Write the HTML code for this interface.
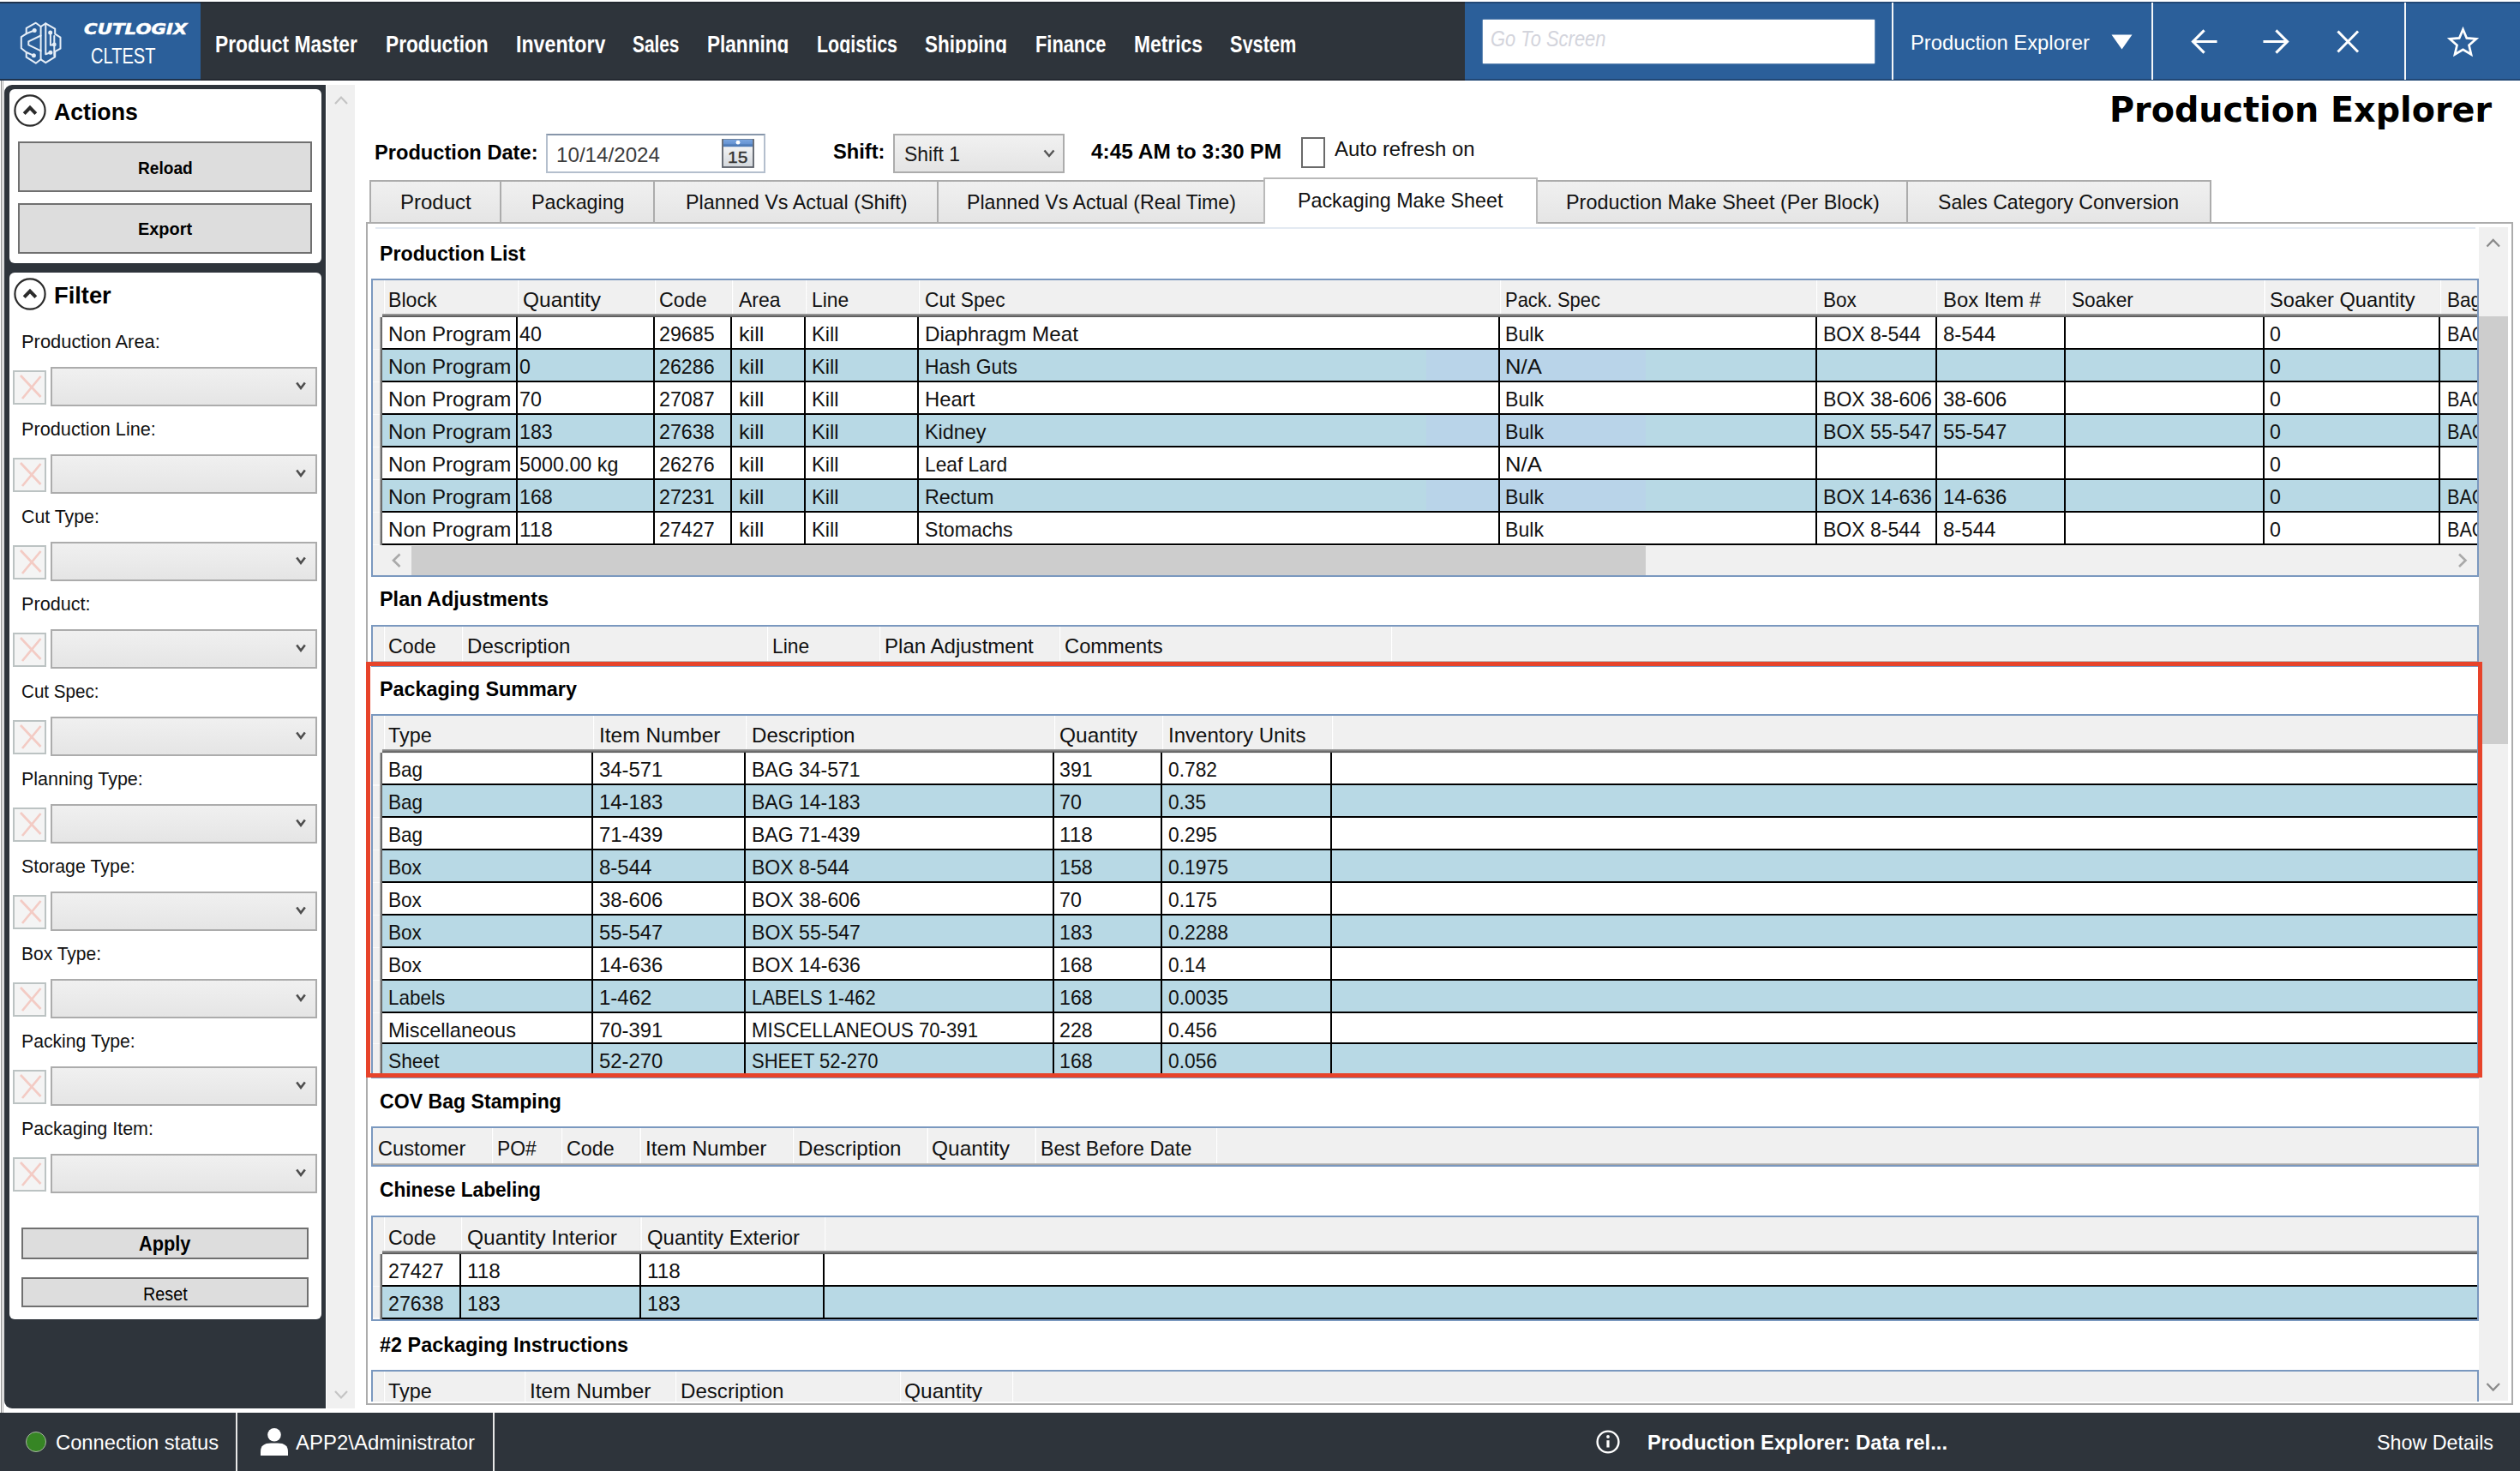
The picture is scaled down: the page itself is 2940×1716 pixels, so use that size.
<!DOCTYPE html>
<html lang="en"><head><meta charset="utf-8"><title>Production Explorer</title>
<style>
html,body{margin:0;padding:0}
body{width:2940px;height:1716px;overflow:hidden;background:#fff;position:relative;font-family:"Liberation Sans",sans-serif}
div,span,svg{position:absolute;box-sizing:border-box}
span{white-space:nowrap;line-height:1;transform-origin:0 0}
</style></head>
<body>
<div style="left:0px;top:2.4px;width:2940px;height:91.6px;background:#2e343b"></div>
<div style="left:0px;top:2.4px;width:234.3px;height:91.6px;background:#2b5f9a"></div>
<div style="left:1708.5px;top:2.4px;width:1231.5px;height:91.6px;background:#2b5f9a"></div>
<div style="left:0px;top:2.4px;width:2940px;height:2.1px;background:rgba(10,15,25,.28)"></div>
<div style="left:0px;top:92px;width:2940px;height:2px;background:rgba(10,15,25,.28)"></div>
<div style="left:0px;top:2.4px;width:234.3px;height:2.1px;background:rgba(30,35,45,.55)"></div>
<div style="left:0px;top:92px;width:234.3px;height:2px;background:rgba(30,35,45,.55)"></div>
<div style="left:2207px;top:3px;width:2px;height:90px;background:#f4f6f8"></div>
<div style="left:2510px;top:3px;width:2px;height:90px;background:#f4f6f8"></div>
<div style="left:2805px;top:3px;width:2px;height:90px;background:#f4f6f8"></div>
<svg style="left:15px;top:18px" width="70" height="64" viewBox="0 0 70 64" fill="none" stroke="#e6eef7" stroke-width="2" stroke-linejoin="round" stroke-linecap="round">
<path d="M26.8 8.7 L15.7 14.8 L15.7 21.3 L9.8 25.2 L9.8 38.3 L15.7 43 L15.7 48.7 L26.8 55.7 L32.6 51.3 L32.6 13 Z"/>
<path d="M38.3 9.4 L49.2 15.7 L49.2 21.7 L55.5 25.7 L55.5 38.7 L49.2 42.2 L49.2 48.3 L38.3 55.2 L32.6 51.3 M32.6 13 L38.3 9.4"/>
<path d="M15.7 21.3 L25.2 17.4 M32.6 23.5 L18.3 30.4 L18.3 34.4 L32.6 41.3 M15.7 43 L24.4 46.8"/>
<path d="M38.3 9.4 L38.3 45.2 L43.9 43.2 M43.9 20.4 L43.9 34.8 L48.3 33.9 M48.3 24 L48.3 47"/>
<circle cx="25.2" cy="17.4" r="1.5" fill="#e6eef7"/><circle cx="24.4" cy="46.8" r="1.5" fill="#e6eef7"/><circle cx="43.7" cy="20" r="1.5" fill="#e6eef7"/><circle cx="43.9" cy="43.2" r="1.5" fill="#e6eef7"/><circle cx="48.3" cy="33.9" r="1.4" fill="#e6eef7"/>
</svg>
<span style="left:98px;top:25.67px;font-size:17.4px;font-weight:700;font-style:italic;color:#fff;font-family:'DejaVu Sans',sans-serif;transform:scaleX(1.2272);-webkit-text-stroke:0.5px #fff;">CUTLOGIX</span>
<span style="left:105.5px;top:53.44px;font-size:25px;color:#fff;transform:scaleX(0.8032);">CLTEST</span>
<div style="left:234px;top:4.5px;width:1475px;height:57.5px;overflow:hidden">
<span style="left:16.8px;top:34.04px;font-size:27px;font-weight:700;color:#fff;transform:scaleX(0.8440);">Product Master</span>
<span style="left:215.6px;top:34.04px;font-size:27px;font-weight:700;color:#fff;transform:scaleX(0.8403);">Production</span>
<span style="left:368px;top:34.04px;font-size:27px;font-weight:700;color:#fff;transform:scaleX(0.8584);">Inventory</span>
<span style="left:504px;top:34.04px;font-size:27px;font-weight:700;color:#fff;transform:scaleX(0.7719);">Sales</span>
<span style="left:591.4px;top:34.04px;font-size:27px;font-weight:700;color:#fff;transform:scaleX(0.8355);">Planning</span>
<span style="left:718.8px;top:34.04px;font-size:27px;font-weight:700;color:#fff;transform:scaleX(0.7930);">Logistics</span>
<span style="left:844.6px;top:34.04px;font-size:27px;font-weight:700;color:#fff;transform:scaleX(0.8317);">Shipping</span>
<span style="left:973.5px;top:34.04px;font-size:27px;font-weight:700;color:#fff;transform:scaleX(0.8083);">Finance</span>
<span style="left:1088.6px;top:34.04px;font-size:27px;font-weight:700;color:#fff;transform:scaleX(0.8444);">Metrics</span>
<span style="left:1200.5px;top:34.04px;font-size:27px;font-weight:700;color:#fff;transform:scaleX(0.8052);">System</span>
</div>
<div style="left:1729.5px;top:22.8px;width:457.5px;height:51.6px;background:#fff;box-shadow:0 0 1.5px #fff"></div>
<span style="left:1739.3px;top:32.19px;font-size:26px;font-style:italic;color:#d3d4dc;transform:scaleX(0.8432);">Go To Screen</span>
<span style="left:2229px;top:37.68px;font-size:24px;color:#fff;transform:scaleX(0.9913);">Production Explorer</span>
<svg style="left:2462px;top:39px" width="27" height="20" viewBox="0 0 27 20"><path d="M1.5 1.5 L25.5 1.5 L13.5 18.5 Z" fill="#fff"/></svg>
<svg style="left:2550px;top:27.2px" width="350" height="44" viewBox="0 0 350 44" fill="none" stroke="#fff" stroke-width="3.1" stroke-linecap="square" stroke-linejoin="miter">
<path d="M35 21.5 L9 21.5 M20.5 9.5 L8.5 21.5 L20.5 33.5"/>
<path d="M92 21.5 L118 21.5 M106.5 9.5 L118.5 21.5 L106.5 33.5"/>
<path d="M178.5 10.5 L200 32.5 M200 10.5 L178.5 32.5" stroke-width="3"/>
<path d="M323.5 7.2 L327.8 17.4 L338.9 18.4 L330.5 25.7 L333.0 36.5 L323.5 30.8 L314.0 36.5 L316.5 25.7 L308.1 18.4 L319.2 17.4 Z" stroke-width="2.7" stroke-linejoin="miter"/>
</svg>
<div style="left:0px;top:94px;width:5px;height:1553.5px;background:linear-gradient(90deg,#fff 0,#fff 0.9px,#8a8a8a 0.9px,#8a8a8a 1.9px,#fff 1.9px,#fff 2.9px,#a8a8a8 2.9px,#a8a8a8 4px,#fff 4px)"></div>
<div style="left:4.6px;top:98.5px;width:375.9px;height:1544.5px;background:#2e343b;border-radius:9px 0 0 9px"></div>
<div style="left:380.5px;top:98.5px;width:33.5px;height:1544.5px;background:#f0f0f0"></div>
<svg style="left:380.5px;top:98.5px" width="34" height="1545" viewBox="0 0 34 1545" fill="none" stroke="#c4c4c4" stroke-width="2.2"><path d="M10 22 L17 14.5 L24 22"/><path d="M10 1524 L17 1531.5 L24 1524"/></svg>
<div style="left:10.6px;top:104px;width:364.2px;height:203px;background:#fff;border-radius:6px"></div>
<div style="left:10.6px;top:318px;width:364.2px;height:1221px;background:#fff;border-radius:6px"></div>
<svg style="left:15.3px;top:109.3px" width="40" height="40" viewBox="0 0 40 40" fill="none" stroke="#2b2b2b"><circle cx="20" cy="20" r="17.6" stroke-width="2.2"/><path d="M13.2 23.6 L20 16.6 L26.8 23.6" stroke-width="4"/></svg>
<svg style="left:15px;top:323px" width="40" height="40" viewBox="0 0 40 40" fill="none" stroke="#2b2b2b"><circle cx="20" cy="20" r="17.6" stroke-width="2.2"/><path d="M13.2 23.6 L20 16.6 L26.8 23.6" stroke-width="4"/></svg>
<span style="left:62.9px;top:117.3px;font-size:28px;font-weight:700;transform:scaleX(0.9521);">Actions</span>
<span style="left:63.3px;top:330.8px;font-size:28px;font-weight:700;transform:scaleX(0.9743);">Filter</span>
<div style="left:20.6px;top:164.6px;width:343.8px;height:59.4px;background:#ddd;border:2px solid #707070"></div>
<span style="left:160.6px;top:185.67px;font-size:20px;font-weight:700;transform:scaleX(0.9565);">Reload</span>
<div style="left:20.6px;top:236.7px;width:343.8px;height:59.4px;background:#ddd;border:2px solid #707070"></div>
<span style="left:161px;top:257.27px;font-size:20px;font-weight:700;transform:scaleX(0.9953);">Export</span>
<span style="left:25.2px;top:387.78px;font-size:22px;color:#111;transform:scaleX(0.9948);">Production Area:</span>
<div style="left:15px;top:432.4px;width:39.3px;height:39.3px;background:#f4f4f4;border:2px solid #bcc3c3"></div>
<svg style="left:15px;top:432.4px" width="39" height="39" viewBox="0 0 39 39" stroke="#f3cbc4" stroke-width="2.7" fill="none"><path d="M9 6 L32.5 31 M32.5 7 L11 33"/></svg>
<div style="left:58.7px;top:428.3px;width:311.6px;height:45.5px;background:linear-gradient(#f0f0f0,#e5e5e5);border:2px solid #acacac"></div>
<svg style="left:344px;top:443px" width="14" height="14" viewBox="0 0 14 14" stroke="#4d4d4d" stroke-width="2.6" fill="none"><path d="M2.2 3.5 L7 9.8 L11.8 3.5"/></svg>
<span style="left:25.2px;top:489.78px;font-size:22px;color:#111;transform:scaleX(0.9867);">Production Line:</span>
<div style="left:15px;top:534.4px;width:39.3px;height:39.3px;background:#f4f4f4;border:2px solid #bcc3c3"></div>
<svg style="left:15px;top:534.4px" width="39" height="39" viewBox="0 0 39 39" stroke="#f3cbc4" stroke-width="2.7" fill="none"><path d="M9 6 L32.5 31 M32.5 7 L11 33"/></svg>
<div style="left:58.7px;top:530.3px;width:311.6px;height:45.5px;background:linear-gradient(#f0f0f0,#e5e5e5);border:2px solid #acacac"></div>
<svg style="left:344px;top:545px" width="14" height="14" viewBox="0 0 14 14" stroke="#4d4d4d" stroke-width="2.6" fill="none"><path d="M2.2 3.5 L7 9.8 L11.8 3.5"/></svg>
<span style="left:25.2px;top:591.78px;font-size:22px;color:#111;transform:scaleX(0.9695);">Cut Type:</span>
<div style="left:15px;top:636.4px;width:39.3px;height:39.3px;background:#f4f4f4;border:2px solid #bcc3c3"></div>
<svg style="left:15px;top:636.4px" width="39" height="39" viewBox="0 0 39 39" stroke="#f3cbc4" stroke-width="2.7" fill="none"><path d="M9 6 L32.5 31 M32.5 7 L11 33"/></svg>
<div style="left:58.7px;top:632.3px;width:311.6px;height:45.5px;background:linear-gradient(#f0f0f0,#e5e5e5);border:2px solid #acacac"></div>
<svg style="left:344px;top:647px" width="14" height="14" viewBox="0 0 14 14" stroke="#4d4d4d" stroke-width="2.6" fill="none"><path d="M2.2 3.5 L7 9.8 L11.8 3.5"/></svg>
<span style="left:25.2px;top:693.78px;font-size:22px;color:#111;transform:scaleX(0.9838);">Product:</span>
<div style="left:15px;top:738.4px;width:39.3px;height:39.3px;background:#f4f4f4;border:2px solid #bcc3c3"></div>
<svg style="left:15px;top:738.4px" width="39" height="39" viewBox="0 0 39 39" stroke="#f3cbc4" stroke-width="2.7" fill="none"><path d="M9 6 L32.5 31 M32.5 7 L11 33"/></svg>
<div style="left:58.7px;top:734.3px;width:311.6px;height:45.5px;background:linear-gradient(#f0f0f0,#e5e5e5);border:2px solid #acacac"></div>
<svg style="left:344px;top:749px" width="14" height="14" viewBox="0 0 14 14" stroke="#4d4d4d" stroke-width="2.6" fill="none"><path d="M2.2 3.5 L7 9.8 L11.8 3.5"/></svg>
<span style="left:25.2px;top:795.78px;font-size:22px;color:#111;transform:scaleX(0.9377);">Cut Spec:</span>
<div style="left:15px;top:840.4px;width:39.3px;height:39.3px;background:#f4f4f4;border:2px solid #bcc3c3"></div>
<svg style="left:15px;top:840.4px" width="39" height="39" viewBox="0 0 39 39" stroke="#f3cbc4" stroke-width="2.7" fill="none"><path d="M9 6 L32.5 31 M32.5 7 L11 33"/></svg>
<div style="left:58.7px;top:836.3px;width:311.6px;height:45.5px;background:linear-gradient(#f0f0f0,#e5e5e5);border:2px solid #acacac"></div>
<svg style="left:344px;top:851px" width="14" height="14" viewBox="0 0 14 14" stroke="#4d4d4d" stroke-width="2.6" fill="none"><path d="M2.2 3.5 L7 9.8 L11.8 3.5"/></svg>
<span style="left:25.2px;top:897.78px;font-size:22px;color:#111;transform:scaleX(0.9768);">Planning Type:</span>
<div style="left:15px;top:942.4px;width:39.3px;height:39.3px;background:#f4f4f4;border:2px solid #bcc3c3"></div>
<svg style="left:15px;top:942.4px" width="39" height="39" viewBox="0 0 39 39" stroke="#f3cbc4" stroke-width="2.7" fill="none"><path d="M9 6 L32.5 31 M32.5 7 L11 33"/></svg>
<div style="left:58.7px;top:938.3px;width:311.6px;height:45.5px;background:linear-gradient(#f0f0f0,#e5e5e5);border:2px solid #acacac"></div>
<svg style="left:344px;top:953px" width="14" height="14" viewBox="0 0 14 14" stroke="#4d4d4d" stroke-width="2.6" fill="none"><path d="M2.2 3.5 L7 9.8 L11.8 3.5"/></svg>
<span style="left:25.2px;top:999.78px;font-size:22px;color:#111;transform:scaleX(0.9717);">Storage Type:</span>
<div style="left:15px;top:1044.4px;width:39.3px;height:39.3px;background:#f4f4f4;border:2px solid #bcc3c3"></div>
<svg style="left:15px;top:1044.4px" width="39" height="39" viewBox="0 0 39 39" stroke="#f3cbc4" stroke-width="2.7" fill="none"><path d="M9 6 L32.5 31 M32.5 7 L11 33"/></svg>
<div style="left:58.7px;top:1040.3px;width:311.6px;height:45.5px;background:linear-gradient(#f0f0f0,#e5e5e5);border:2px solid #acacac"></div>
<svg style="left:344px;top:1055px" width="14" height="14" viewBox="0 0 14 14" stroke="#4d4d4d" stroke-width="2.6" fill="none"><path d="M2.2 3.5 L7 9.8 L11.8 3.5"/></svg>
<span style="left:25.2px;top:1101.78px;font-size:22px;color:#111;transform:scaleX(0.9544);">Box Type:</span>
<div style="left:15px;top:1146.4px;width:39.3px;height:39.3px;background:#f4f4f4;border:2px solid #bcc3c3"></div>
<svg style="left:15px;top:1146.4px" width="39" height="39" viewBox="0 0 39 39" stroke="#f3cbc4" stroke-width="2.7" fill="none"><path d="M9 6 L32.5 31 M32.5 7 L11 33"/></svg>
<div style="left:58.7px;top:1142.3px;width:311.6px;height:45.5px;background:linear-gradient(#f0f0f0,#e5e5e5);border:2px solid #acacac"></div>
<svg style="left:344px;top:1157px" width="14" height="14" viewBox="0 0 14 14" stroke="#4d4d4d" stroke-width="2.6" fill="none"><path d="M2.2 3.5 L7 9.8 L11.8 3.5"/></svg>
<span style="left:25.2px;top:1203.78px;font-size:22px;color:#111;transform:scaleX(0.9630);">Packing Type:</span>
<div style="left:15px;top:1248.4px;width:39.3px;height:39.3px;background:#f4f4f4;border:2px solid #bcc3c3"></div>
<svg style="left:15px;top:1248.4px" width="39" height="39" viewBox="0 0 39 39" stroke="#f3cbc4" stroke-width="2.7" fill="none"><path d="M9 6 L32.5 31 M32.5 7 L11 33"/></svg>
<div style="left:58.7px;top:1244.3px;width:311.6px;height:45.5px;background:linear-gradient(#f0f0f0,#e5e5e5);border:2px solid #acacac"></div>
<svg style="left:344px;top:1259px" width="14" height="14" viewBox="0 0 14 14" stroke="#4d4d4d" stroke-width="2.6" fill="none"><path d="M2.2 3.5 L7 9.8 L11.8 3.5"/></svg>
<span style="left:25.2px;top:1305.78px;font-size:22px;color:#111;transform:scaleX(0.9760);">Packaging Item:</span>
<div style="left:15px;top:1350.4px;width:39.3px;height:39.3px;background:#f4f4f4;border:2px solid #bcc3c3"></div>
<svg style="left:15px;top:1350.4px" width="39" height="39" viewBox="0 0 39 39" stroke="#f3cbc4" stroke-width="2.7" fill="none"><path d="M9 6 L32.5 31 M32.5 7 L11 33"/></svg>
<div style="left:58.7px;top:1346.3px;width:311.6px;height:45.5px;background:linear-gradient(#f0f0f0,#e5e5e5);border:2px solid #acacac"></div>
<svg style="left:344px;top:1361px" width="14" height="14" viewBox="0 0 14 14" stroke="#4d4d4d" stroke-width="2.6" fill="none"><path d="M2.2 3.5 L7 9.8 L11.8 3.5"/></svg>
<div style="left:24.7px;top:1432px;width:335.3px;height:37.4px;background:#ddd;border:2px solid #707070"></div>
<span style="left:162.05px;top:1440.13px;font-size:23px;font-weight:700;transform:scaleX(0.9462);">Apply</span>
<div style="left:24.7px;top:1490.2px;width:335.3px;height:35.2px;background:#ddd;border:2px solid #707070"></div>
<span style="left:167px;top:1498.98px;font-size:22px;transform:scaleX(0.8986);">Reset</span>
<div style="left:0px;top:1647.5px;width:2940px;height:68.5px;background:#2e343b"></div>
<div style="left:275px;top:1647.5px;width:2px;height:68.5px;background:#e8e8e8"></div>
<div style="left:574.5px;top:1647.5px;width:2px;height:68.5px;background:#e8e8e8"></div>
<div style="left:30px;top:1669.9px;width:24px;height:24px;background:#368524;border:1.6px solid #a9b3a6;border-radius:50%"></div>
<span style="left:65px;top:1671.28px;font-size:24px;color:#fff;transform:scaleX(0.9890);">Connection status</span>
<svg style="left:303px;top:1665px" width="34" height="34" viewBox="0 0 34 34" fill="#fff"><circle cx="17" cy="8.8" r="7.8"/><path d="M1 33 L1 28.5 Q1 18.6 13 18.6 L21 18.6 Q33 18.6 33 28.5 L33 33 Z"/></svg>
<span style="left:345px;top:1671.28px;font-size:24px;color:#fff;transform:scaleX(0.9981);">APP2\Administrator</span>
<svg style="left:1860px;top:1666px" width="32" height="32" viewBox="0 0 32 32" fill="none" stroke="#fff"><circle cx="16" cy="16" r="12.4" stroke-width="2.4"/><path d="M16 14.2 L16 22.5" stroke-width="3.2"/><circle cx="16" cy="10" r="1.9" fill="#fff" stroke="none"/></svg>
<span style="left:1922px;top:1671.08px;font-size:24px;font-weight:700;color:#fff;transform:scaleX(0.9904);">Production Explorer: Data rel...</span>
<span style="left:2773px;top:1671.08px;font-size:24px;color:#fff;transform:scaleX(0.9712);">Show Details</span>
<span style="left:2461px;top:107.69px;font-size:41px;font-weight:700;font-family:'DejaVu Sans',sans-serif;transform:scaleX(0.9678);">Production Explorer</span>
<span style="left:437px;top:166.26px;font-size:24.5px;font-weight:700;transform:scaleX(0.9653);">Production Date:</span>
<div style="left:637.3px;top:156.4px;width:255.6px;height:45.7px;background:#fff;border:2px solid #b4bfcd;border-top-color:#8796aa"></div>
<span style="left:648.6px;top:168.68px;font-size:24px;color:#3c3c3c;transform:scaleX(1.0073);">10/14/2024</span>
<svg style="left:842px;top:162.4px" width="38" height="34" viewBox="0 0 38 34"><defs><linearGradient id="cg" x1="0" y1="0" x2="0" y2="1"><stop offset="0" stop-color="#fdfdfd"/><stop offset="1" stop-color="#d3d7dc"/></linearGradient><linearGradient id="ch" x1="0" y1="0" x2="0" y2="1"><stop offset="0" stop-color="#7aa6e0"/><stop offset="0.65" stop-color="#6593d2"/><stop offset="0.7" stop-color="#4f7cb8"/><stop offset="1" stop-color="#4f7cb8"/></linearGradient></defs>
<rect x="1" y="1" width="36" height="32" fill="url(#cg)" stroke="#5a5f68" stroke-width="1.8"/><rect x="1.9" y="0.6" width="34.2" height="8.6" fill="url(#ch)"/><circle cx="19" cy="4.2" r="2.4" fill="#fff"/>
<text x="7" y="28.3" font-family="Liberation Sans, sans-serif" font-size="19" fill="#333" stroke="#333" stroke-width="0.35" textLength="23.4" lengthAdjust="spacingAndGlyphs">15</text></svg>
<span style="left:971.8px;top:165.46px;font-size:24.5px;font-weight:700;transform:scaleX(0.9665);">Shift:</span>
<div style="left:1042.3px;top:156.3px;width:199.4px;height:45.6px;background:linear-gradient(#f1f1f1,#e4e4e4);border:2px solid #acacac"></div>
<span style="left:1054.8px;top:168.18px;font-size:24px;color:#1a1a1a;transform:scaleX(0.9553);">Shift 1</span>
<svg style="left:1216px;top:172px" width="16" height="14" viewBox="0 0 16 14" stroke="#555" stroke-width="2.4" fill="none"><path d="M2.5 3.5 L8 10 L13.5 3.5"/></svg>
<span style="left:1273px;top:164.96px;font-size:24.5px;font-weight:700;transform:scaleX(0.9985);">4:45 AM to 3:30 PM</span>
<div style="left:1518px;top:160.2px;width:28px;height:36px;background:#fff;border:2px solid #6a6a6a"></div>
<span style="left:1556.7px;top:162.48px;font-size:24px;color:#111;transform:scaleX(0.9972);">Auto refresh on</span>
<div style="left:427px;top:258.6px;width:2504.5px;height:1380.4px;background:#fff;border:2px solid #acacac"></div>
<div style="left:431.15px;top:210.4px;width:155.1px;height:50px;background:linear-gradient(#f0f0f0,#e5e5e5);border:2px solid #acacac;border-bottom:none;height:48.2px"></div>
<span style="left:467.35px;top:223.98px;font-size:24px;color:#111;transform:scaleX(1.0002);">Product</span>
<div style="left:582.75px;top:210.4px;width:182.8px;height:50px;background:linear-gradient(#f0f0f0,#e5e5e5);border:2px solid #acacac;border-bottom:none;height:48.2px"></div>
<span style="left:619.92px;top:223.98px;font-size:24px;color:#111;transform:scaleX(0.9678);">Packaging</span>
<div style="left:762.05px;top:210.4px;width:334.1px;height:50px;background:linear-gradient(#f0f0f0,#e5e5e5);border:2px solid #acacac;border-bottom:none;height:48.2px"></div>
<span style="left:799.83px;top:223.98px;font-size:24px;color:#111;transform:scaleX(0.9740);">Planned Vs Actual (Shift)</span>
<div style="left:1092.65px;top:210.4px;width:384.5px;height:50px;background:linear-gradient(#f0f0f0,#e5e5e5);border:2px solid #acacac;border-bottom:none;height:48.2px"></div>
<span style="left:1127.91px;top:223.98px;font-size:24px;color:#111;transform:scaleX(0.9644);">Planned Vs Actual (Real Time)</span>
<div style="left:1791.15px;top:210.4px;width:436.6px;height:50px;background:linear-gradient(#f0f0f0,#e5e5e5);border:2px solid #acacac;border-bottom:none;height:48.2px"></div>
<span style="left:1826.58px;top:223.98px;font-size:24px;color:#111;transform:scaleX(0.9756);">Production Make Sheet (Per Block)</span>
<div style="left:2224.25px;top:210.4px;width:355.5px;height:50px;background:linear-gradient(#f0f0f0,#e5e5e5);border:2px solid #acacac;border-bottom:none;height:48.2px"></div>
<span style="left:2261.47px;top:223.98px;font-size:24px;color:#111;transform:scaleX(0.9619);">Sales Category Conversion</span>
<div style="left:1474.1px;top:206.6px;width:319.7px;height:54.2px;background:#fff;border:2px solid #b9b9b9;border-bottom:none"></div>
<span style="left:1514.44px;top:222.18px;font-size:24px;color:#111;transform:scaleX(0.9699);">Packaging Make Sheet</span>
<div style="left:438px;top:264.7px;width:2450px;height:2px;background:#e3eaf2"></div>
<div style="left:2892px;top:264.7px;width:33.6px;height:1369px;background:#f0f0f0"></div>
<div style="left:2892.3px;top:368.5px;width:33.3px;height:499.5px;background:#cdcdcd"></div>
<svg style="left:2892px;top:264.7px" width="34" height="1373" viewBox="0 0 34 1373" fill="none" stroke="#8a8a8a" stroke-width="2.3"><path d="M9.5 22.5 L16.7 15 L24 22.5"/><path d="M9.5 1349 L16.7 1356.5 L24 1349"/></svg>
<span style="left:443px;top:283.86px;font-size:24.5px;font-weight:700;transform:scaleX(0.9460);">Production List</span>
<div style="left:432.5px;top:324.5px;width:2459px;border:2px solid #7a98bf;height:348px;background:#f0f0f0;overflow:hidden">
<div style="left:12px;top:0px;width:3.4px;height:41px;background:linear-gradient(90deg,#e4e4e4,#fff 45%,#fff 60%,#e8e8e8)"></div>
<div style="left:168px;top:0px;width:3.4px;height:41px;background:linear-gradient(90deg,#e4e4e4,#fff 45%,#fff 60%,#e8e8e8)"></div>
<div style="left:328px;top:0px;width:3.4px;height:41px;background:linear-gradient(90deg,#e4e4e4,#fff 45%,#fff 60%,#e8e8e8)"></div>
<div style="left:418px;top:0px;width:3.4px;height:41px;background:linear-gradient(90deg,#e4e4e4,#fff 45%,#fff 60%,#e8e8e8)"></div>
<div style="left:504px;top:0px;width:3.4px;height:41px;background:linear-gradient(90deg,#e4e4e4,#fff 45%,#fff 60%,#e8e8e8)"></div>
<div style="left:636px;top:0px;width:3.4px;height:41px;background:linear-gradient(90deg,#e4e4e4,#fff 45%,#fff 60%,#e8e8e8)"></div>
<div style="left:1314px;top:0px;width:3.4px;height:41px;background:linear-gradient(90deg,#e4e4e4,#fff 45%,#fff 60%,#e8e8e8)"></div>
<div style="left:1683.6px;top:0px;width:3.4px;height:41px;background:linear-gradient(90deg,#e4e4e4,#fff 45%,#fff 60%,#e8e8e8)"></div>
<div style="left:1823.6px;top:0px;width:3.4px;height:41px;background:linear-gradient(90deg,#e4e4e4,#fff 45%,#fff 60%,#e8e8e8)"></div>
<div style="left:1973.6px;top:0px;width:3.4px;height:41px;background:linear-gradient(90deg,#e4e4e4,#fff 45%,#fff 60%,#e8e8e8)"></div>
<div style="left:2205.7px;top:0px;width:3.4px;height:41px;background:linear-gradient(90deg,#e4e4e4,#fff 45%,#fff 60%,#e8e8e8)"></div>
<div style="left:2411.4px;top:0px;width:3.4px;height:41px;background:linear-gradient(90deg,#e4e4e4,#fff 45%,#fff 60%,#e8e8e8)"></div>
<span style="left:18.8px;top:11.68px;font-size:24px;color:#111;transform:scaleX(0.9652);">Block</span>
<span style="left:175px;top:11.68px;font-size:24px;color:#111;transform:scaleX(1.0193);">Quantity</span>
<span style="left:334.5px;top:11.68px;font-size:24px;color:#111;transform:scaleX(0.9687);">Code</span>
<span style="left:427.5px;top:11.68px;font-size:24px;color:#111;transform:scaleX(0.9583);">Area</span>
<span style="left:512.5px;top:11.68px;font-size:24px;color:#111;transform:scaleX(0.9522);">Line</span>
<span style="left:644.2px;top:11.68px;font-size:24px;color:#111;transform:scaleX(0.9483);">Cut Spec</span>
<span style="left:1321.5px;top:11.68px;font-size:24px;color:#111;transform:scaleX(0.9139);">Pack. Spec</span>
<span style="left:1692.5px;top:11.68px;font-size:24px;color:#111;transform:scaleX(0.9390);">Box</span>
<span style="left:1832.5px;top:11.68px;font-size:24px;color:#111;transform:scaleX(0.9927);">Box Item #</span>
<span style="left:1982.1px;top:11.68px;font-size:24px;color:#111;transform:scaleX(0.9448);">Soaker</span>
<span style="left:2213.1px;top:11.68px;font-size:24px;color:#111;transform:scaleX(0.9851);">Soaker Quantity</span>
<span style="left:2420.5px;top:11.68px;font-size:24px;color:#111;transform:scaleX(0.9385);">Bag</span>
<div style="left:11.5px;top:39.3px;width:2455px;height:4.2px;background:linear-gradient(#a8a8a8,#4d4d4d)"></div>
<div style="left:11.5px;top:43.5px;width:2443.5px;height:38px;background:#fff"></div>
<div style="left:11.5px;top:81.5px;width:2443.5px;height:38px;background:#b8d9e5"></div>
<div style="left:11.5px;top:119.5px;width:2443.5px;height:38px;background:#fff"></div>
<div style="left:11.5px;top:157.5px;width:2443.5px;height:38px;background:#b8d9e5"></div>
<div style="left:11.5px;top:195.5px;width:2443.5px;height:38px;background:#fff"></div>
<div style="left:11.5px;top:233.5px;width:2443.5px;height:38px;background:#b8d9e5"></div>
<div style="left:11.5px;top:271.5px;width:2443.5px;height:38px;background:#fff"></div>
<div style="left:8.2px;top:43px;width:3.6px;height:266.5px;background:linear-gradient(90deg,#b8b8b8,#4a4a4a)"></div>
<div style="left:0px;top:80px;width:8.2px;height:1.6px;background:#fafafa"></div>
<div style="left:0px;top:118px;width:8.2px;height:1.6px;background:#fafafa"></div>
<div style="left:0px;top:156px;width:8.2px;height:1.6px;background:#fafafa"></div>
<div style="left:0px;top:194px;width:8.2px;height:1.6px;background:#fafafa"></div>
<div style="left:0px;top:232px;width:8.2px;height:1.6px;background:#fafafa"></div>
<div style="left:0px;top:270px;width:8.2px;height:1.6px;background:#fafafa"></div>
<div style="left:0px;top:308px;width:8.2px;height:1.6px;background:#fafafa"></div>
<div style="left:1229.5px;top:81.5px;width:255.6px;height:38px;background:#b9d4e9"></div>
<div style="left:1229.5px;top:157.5px;width:255.6px;height:38px;background:#b9d4e9"></div>
<div style="left:1229.5px;top:233.5px;width:255.6px;height:38px;background:#b9d4e9"></div>
<div style="left:11.5px;top:79.5px;width:2443.5px;height:2px;background:#000"></div>
<div style="left:11.5px;top:117.5px;width:2443.5px;height:2px;background:#000"></div>
<div style="left:11.5px;top:155.5px;width:2443.5px;height:2px;background:#000"></div>
<div style="left:11.5px;top:193.5px;width:2443.5px;height:2px;background:#000"></div>
<div style="left:11.5px;top:231.5px;width:2443.5px;height:2px;background:#000"></div>
<div style="left:11.5px;top:269.5px;width:2443.5px;height:2px;background:#000"></div>
<div style="left:11.5px;top:307.5px;width:2443.5px;height:2px;background:#000"></div>
<div style="left:167.5px;top:43.3px;width:2px;height:266px;background:#000"></div>
<div style="left:327.5px;top:43.3px;width:2px;height:266px;background:#000"></div>
<div style="left:417.5px;top:43.3px;width:2px;height:266px;background:#000"></div>
<div style="left:503.5px;top:43.3px;width:2px;height:266px;background:#000"></div>
<div style="left:635.5px;top:43.3px;width:2px;height:266px;background:#000"></div>
<div style="left:1313.5px;top:43.3px;width:2px;height:266px;background:#000"></div>
<div style="left:1683.1px;top:43.3px;width:2px;height:266px;background:#000"></div>
<div style="left:1823.1px;top:43.3px;width:2px;height:266px;background:#000"></div>
<div style="left:1973.1px;top:43.3px;width:2px;height:266px;background:#000"></div>
<div style="left:2205.2px;top:43.3px;width:2px;height:266px;background:#000"></div>
<div style="left:2410.9px;top:43.3px;width:2px;height:266px;background:#000"></div>
<span style="left:18.8px;top:51.38px;font-size:24px;color:#111;transform:scaleX(1.0041);">Non Program</span>
<span style="left:171px;top:51.38px;font-size:24px;color:#111;transform:scaleX(0.9692);">40</span>
<span style="left:334.5px;top:51.38px;font-size:24px;color:#111;transform:scaleX(0.9692);">29685</span>
<span style="left:427.5px;top:51.38px;font-size:24px;color:#111;transform:scaleX(1.0489);">kill</span>
<span style="left:512.5px;top:51.38px;font-size:24px;color:#111;transform:scaleX(0.9798);">Kill</span>
<span style="left:644.2px;top:51.38px;font-size:24px;color:#111;transform:scaleX(1.0081);">Diaphragm Meat</span>
<span style="left:1321.5px;top:51.38px;font-size:24px;color:#111;transform:scaleX(0.9651);">Bulk</span>
<span style="left:1692.5px;top:51.38px;font-size:24px;color:#111;transform:scaleX(0.9595);">BOX 8-544</span>
<span style="left:1832.5px;top:51.38px;font-size:24px;color:#111;transform:scaleX(0.9994);">8-544</span>
<span style="left:2213.1px;top:51.38px;font-size:24px;color:#111;transform:scaleX(0.9692);">0</span>
<span style="left:2420.5px;top:51.38px;font-size:24px;color:#111;transform:scaleX(0.9017);">BAG</span>
<span style="left:18.8px;top:89.38px;font-size:24px;color:#111;transform:scaleX(1.0041);">Non Program</span>
<span style="left:171px;top:89.38px;font-size:24px;color:#111;transform:scaleX(0.9692);">0</span>
<span style="left:334.5px;top:89.38px;font-size:24px;color:#111;transform:scaleX(0.9692);">26286</span>
<span style="left:427.5px;top:89.38px;font-size:24px;color:#111;transform:scaleX(1.0489);">kill</span>
<span style="left:512.5px;top:89.38px;font-size:24px;color:#111;transform:scaleX(0.9798);">Kill</span>
<span style="left:644.2px;top:89.38px;font-size:24px;color:#111;transform:scaleX(0.9517);">Hash Guts</span>
<span style="left:1321.5px;top:89.38px;font-size:24px;color:#111;transform:scaleX(1.0697);">N/A</span>
<span style="left:2213.1px;top:89.38px;font-size:24px;color:#111;transform:scaleX(0.9692);">0</span>
<span style="left:18.8px;top:127.38px;font-size:24px;color:#111;transform:scaleX(1.0041);">Non Program</span>
<span style="left:171px;top:127.38px;font-size:24px;color:#111;transform:scaleX(0.9692);">70</span>
<span style="left:334.5px;top:127.38px;font-size:24px;color:#111;transform:scaleX(0.9692);">27087</span>
<span style="left:427.5px;top:127.38px;font-size:24px;color:#111;transform:scaleX(1.0489);">kill</span>
<span style="left:512.5px;top:127.38px;font-size:24px;color:#111;transform:scaleX(0.9798);">Kill</span>
<span style="left:644.2px;top:127.38px;font-size:24px;color:#111;transform:scaleX(0.9930);">Heart</span>
<span style="left:1321.5px;top:127.38px;font-size:24px;color:#111;transform:scaleX(0.9651);">Bulk</span>
<span style="left:1692.5px;top:127.38px;font-size:24px;color:#111;transform:scaleX(0.9605);">BOX 38-606</span>
<span style="left:1832.5px;top:127.38px;font-size:24px;color:#111;transform:scaleX(0.9940);">38-606</span>
<span style="left:2213.1px;top:127.38px;font-size:24px;color:#111;transform:scaleX(0.9692);">0</span>
<span style="left:2420.5px;top:127.38px;font-size:24px;color:#111;transform:scaleX(0.9017);">BAG</span>
<span style="left:18.8px;top:165.38px;font-size:24px;color:#111;transform:scaleX(1.0041);">Non Program</span>
<span style="left:171px;top:165.38px;font-size:24px;color:#111;transform:scaleX(0.9692);">183</span>
<span style="left:334.5px;top:165.38px;font-size:24px;color:#111;transform:scaleX(0.9692);">27638</span>
<span style="left:427.5px;top:165.38px;font-size:24px;color:#111;transform:scaleX(1.0489);">kill</span>
<span style="left:512.5px;top:165.38px;font-size:24px;color:#111;transform:scaleX(0.9798);">Kill</span>
<span style="left:644.2px;top:165.38px;font-size:24px;color:#111;transform:scaleX(0.9751);">Kidney</span>
<span style="left:1321.5px;top:165.38px;font-size:24px;color:#111;transform:scaleX(0.9651);">Bulk</span>
<span style="left:1692.5px;top:165.38px;font-size:24px;color:#111;transform:scaleX(0.9605);">BOX 55-547</span>
<span style="left:1832.5px;top:165.38px;font-size:24px;color:#111;transform:scaleX(0.9940);">55-547</span>
<span style="left:2213.1px;top:165.38px;font-size:24px;color:#111;transform:scaleX(0.9692);">0</span>
<span style="left:2420.5px;top:165.38px;font-size:24px;color:#111;transform:scaleX(0.9017);">BAG</span>
<span style="left:18.8px;top:203.38px;font-size:24px;color:#111;transform:scaleX(1.0041);">Non Program</span>
<span style="left:171px;top:203.38px;font-size:24px;color:#111;transform:scaleX(0.9720);">5000.00 kg</span>
<span style="left:334.5px;top:203.38px;font-size:24px;color:#111;transform:scaleX(0.9692);">26276</span>
<span style="left:427.5px;top:203.38px;font-size:24px;color:#111;transform:scaleX(1.0489);">kill</span>
<span style="left:512.5px;top:203.38px;font-size:24px;color:#111;transform:scaleX(0.9798);">Kill</span>
<span style="left:644.2px;top:203.38px;font-size:24px;color:#111;transform:scaleX(0.9474);">Leaf Lard</span>
<span style="left:1321.5px;top:203.38px;font-size:24px;color:#111;transform:scaleX(1.0697);">N/A</span>
<span style="left:2213.1px;top:203.38px;font-size:24px;color:#111;transform:scaleX(0.9692);">0</span>
<span style="left:18.8px;top:241.38px;font-size:24px;color:#111;transform:scaleX(1.0041);">Non Program</span>
<span style="left:171px;top:241.38px;font-size:24px;color:#111;transform:scaleX(0.9692);">168</span>
<span style="left:334.5px;top:241.38px;font-size:24px;color:#111;transform:scaleX(0.9692);">27231</span>
<span style="left:427.5px;top:241.38px;font-size:24px;color:#111;transform:scaleX(1.0489);">kill</span>
<span style="left:512.5px;top:241.38px;font-size:24px;color:#111;transform:scaleX(0.9798);">Kill</span>
<span style="left:644.2px;top:241.38px;font-size:24px;color:#111;transform:scaleX(0.9716);">Rectum</span>
<span style="left:1321.5px;top:241.38px;font-size:24px;color:#111;transform:scaleX(0.9651);">Bulk</span>
<span style="left:1692.5px;top:241.38px;font-size:24px;color:#111;transform:scaleX(0.9605);">BOX 14-636</span>
<span style="left:1832.5px;top:241.38px;font-size:24px;color:#111;transform:scaleX(0.9940);">14-636</span>
<span style="left:2213.1px;top:241.38px;font-size:24px;color:#111;transform:scaleX(0.9692);">0</span>
<span style="left:2420.5px;top:241.38px;font-size:24px;color:#111;transform:scaleX(0.9017);">BAG</span>
<span style="left:18.8px;top:279.38px;font-size:24px;color:#111;transform:scaleX(1.0041);">Non Program</span>
<span style="left:171px;top:279.38px;font-size:24px;color:#111;transform:scaleX(1.0144);">118</span>
<span style="left:334.5px;top:279.38px;font-size:24px;color:#111;transform:scaleX(0.9692);">27427</span>
<span style="left:427.5px;top:279.38px;font-size:24px;color:#111;transform:scaleX(1.0489);">kill</span>
<span style="left:512.5px;top:279.38px;font-size:24px;color:#111;transform:scaleX(0.9798);">Kill</span>
<span style="left:644.2px;top:279.38px;font-size:24px;color:#111;transform:scaleX(0.9618);">Stomachs</span>
<span style="left:1321.5px;top:279.38px;font-size:24px;color:#111;transform:scaleX(0.9651);">Bulk</span>
<span style="left:1692.5px;top:279.38px;font-size:24px;color:#111;transform:scaleX(0.9595);">BOX 8-544</span>
<span style="left:1832.5px;top:279.38px;font-size:24px;color:#111;transform:scaleX(0.9994);">8-544</span>
<span style="left:2213.1px;top:279.38px;font-size:24px;color:#111;transform:scaleX(0.9692);">0</span>
<span style="left:2420.5px;top:279.38px;font-size:24px;color:#111;transform:scaleX(0.9017);">BAG</span>
</div>
<div style="left:434.5px;top:637px;width:2455px;height:33.5px;background:#f0f0f0"></div>
<div style="left:480px;top:637px;width:1439.6px;height:33.5px;background:#cdcdcd"></div>
<svg style="left:434.5px;top:637px" width="2455" height="34" viewBox="0 0 2455 34" fill="none" stroke="#a9a9a9" stroke-width="2.6"><path d="M31.5 9.5 L24 16.7 L31.5 24"/><path d="M2434 9.5 L2441.5 16.7 L2434 24"/></svg>
<span style="left:443px;top:686.76px;font-size:24.5px;font-weight:700;transform:scaleX(0.9561);">Plan Adjustments</span>
<div style="left:432.5px;top:728.5px;width:2459px;border:2px solid #7a98bf;height:49.5px;background:#f0f0f0;overflow:hidden">
<div style="left:12px;top:0px;width:3.4px;height:41px;background:linear-gradient(90deg,#e4e4e4,#fff 45%,#fff 60%,#e8e8e8)"></div>
<div style="left:103px;top:0px;width:3.4px;height:41px;background:linear-gradient(90deg,#e4e4e4,#fff 45%,#fff 60%,#e8e8e8)"></div>
<div style="left:459px;top:0px;width:3.4px;height:41px;background:linear-gradient(90deg,#e4e4e4,#fff 45%,#fff 60%,#e8e8e8)"></div>
<div style="left:590px;top:0px;width:3.4px;height:41px;background:linear-gradient(90deg,#e4e4e4,#fff 45%,#fff 60%,#e8e8e8)"></div>
<div style="left:800px;top:0px;width:3.4px;height:41px;background:linear-gradient(90deg,#e4e4e4,#fff 45%,#fff 60%,#e8e8e8)"></div>
<div style="left:1187.5px;top:0px;width:3.4px;height:41px;background:linear-gradient(90deg,#e4e4e4,#fff 45%,#fff 60%,#e8e8e8)"></div>
<span style="left:18.8px;top:11.68px;font-size:24px;color:#111;transform:scaleX(0.9687);">Code</span>
<span style="left:110px;top:11.68px;font-size:24px;color:#111;transform:scaleX(1.0036);">Description</span>
<span style="left:466.5px;top:11.68px;font-size:24px;color:#111;transform:scaleX(0.9522);">Line</span>
<span style="left:597.5px;top:11.68px;font-size:24px;color:#111;transform:scaleX(1.0019);">Plan Adjustment</span>
<span style="left:807.5px;top:11.68px;font-size:24px;color:#111;transform:scaleX(0.9881);">Comments</span>
<div style="left:0px;top:40.5px;width:2455px;height:3px;background:linear-gradient(#c4c4c4,#8a8a8a)"></div>
</div>
<span style="left:443px;top:792.16px;font-size:24.5px;font-weight:700;transform:scaleX(0.9540);">Packaging Summary</span>
<div style="left:432.5px;top:832.5px;width:2459px;border:2px solid #7a98bf;height:425.5px;background:#f0f0f0;overflow:hidden">
<div style="left:12px;top:0px;width:3.4px;height:41px;background:linear-gradient(90deg,#e4e4e4,#fff 45%,#fff 60%,#e8e8e8)"></div>
<div style="left:256.4px;top:0px;width:3.4px;height:41px;background:linear-gradient(90deg,#e4e4e4,#fff 45%,#fff 60%,#e8e8e8)"></div>
<div style="left:434px;top:0px;width:3.4px;height:41px;background:linear-gradient(90deg,#e4e4e4,#fff 45%,#fff 60%,#e8e8e8)"></div>
<div style="left:794px;top:0px;width:3.4px;height:41px;background:linear-gradient(90deg,#e4e4e4,#fff 45%,#fff 60%,#e8e8e8)"></div>
<div style="left:920px;top:0px;width:3.4px;height:41px;background:linear-gradient(90deg,#e4e4e4,#fff 45%,#fff 60%,#e8e8e8)"></div>
<div style="left:1118px;top:0px;width:3.4px;height:41px;background:linear-gradient(90deg,#e4e4e4,#fff 45%,#fff 60%,#e8e8e8)"></div>
<span style="left:18.8px;top:11.68px;font-size:24px;color:#111;transform:scaleX(0.9770);">Type</span>
<span style="left:264px;top:11.68px;font-size:24px;color:#111;transform:scaleX(1.0198);">Item Number</span>
<span style="left:442px;top:11.68px;font-size:24px;color:#111;transform:scaleX(1.0036);">Description</span>
<span style="left:801px;top:11.68px;font-size:24px;color:#111;transform:scaleX(1.0193);">Quantity</span>
<span style="left:928px;top:11.68px;font-size:24px;color:#111;transform:scaleX(1.0023);">Inventory Units</span>
<div style="left:11.5px;top:39.8px;width:2455px;height:4.2px;background:linear-gradient(#a8a8a8,#4d4d4d)"></div>
<div style="left:11.5px;top:44px;width:2443.5px;height:37.94px;background:#fff"></div>
<div style="left:11.5px;top:81.94px;width:2443.5px;height:37.94px;background:#b8d9e5"></div>
<div style="left:11.5px;top:119.88px;width:2443.5px;height:37.94px;background:#fff"></div>
<div style="left:11.5px;top:157.82px;width:2443.5px;height:37.94px;background:#b8d9e5"></div>
<div style="left:11.5px;top:195.76px;width:2443.5px;height:37.94px;background:#fff"></div>
<div style="left:11.5px;top:233.7px;width:2443.5px;height:37.94px;background:#b8d9e5"></div>
<div style="left:11.5px;top:271.64px;width:2443.5px;height:37.94px;background:#fff"></div>
<div style="left:11.5px;top:309.58px;width:2443.5px;height:37.94px;background:#b8d9e5"></div>
<div style="left:11.5px;top:347.52px;width:2443.5px;height:36.18px;background:#fff"></div>
<div style="left:11.5px;top:383.7px;width:2443.5px;height:37.3px;background:#b8d9e5"></div>
<div style="left:8.2px;top:43.5px;width:3.6px;height:377.5px;background:linear-gradient(90deg,#b8b8b8,#4a4a4a)"></div>
<div style="left:0px;top:80.44px;width:8.2px;height:1.6px;background:#fafafa"></div>
<div style="left:0px;top:118.38px;width:8.2px;height:1.6px;background:#fafafa"></div>
<div style="left:0px;top:156.32px;width:8.2px;height:1.6px;background:#fafafa"></div>
<div style="left:0px;top:194.26px;width:8.2px;height:1.6px;background:#fafafa"></div>
<div style="left:0px;top:232.2px;width:8.2px;height:1.6px;background:#fafafa"></div>
<div style="left:0px;top:270.14px;width:8.2px;height:1.6px;background:#fafafa"></div>
<div style="left:0px;top:308.08px;width:8.2px;height:1.6px;background:#fafafa"></div>
<div style="left:0px;top:346.02px;width:8.2px;height:1.6px;background:#fafafa"></div>
<div style="left:0px;top:382.2px;width:8.2px;height:1.6px;background:#fafafa"></div>
<div style="left:0px;top:419.5px;width:8.2px;height:1.6px;background:#fafafa"></div>
<div style="left:11.5px;top:79.94px;width:2443.5px;height:2px;background:#000"></div>
<div style="left:11.5px;top:117.88px;width:2443.5px;height:2px;background:#000"></div>
<div style="left:11.5px;top:155.82px;width:2443.5px;height:2px;background:#000"></div>
<div style="left:11.5px;top:193.76px;width:2443.5px;height:2px;background:#000"></div>
<div style="left:11.5px;top:231.7px;width:2443.5px;height:2px;background:#000"></div>
<div style="left:11.5px;top:269.64px;width:2443.5px;height:2px;background:#000"></div>
<div style="left:11.5px;top:307.58px;width:2443.5px;height:2px;background:#000"></div>
<div style="left:11.5px;top:345.52px;width:2443.5px;height:2px;background:#000"></div>
<div style="left:11.5px;top:381.7px;width:2443.5px;height:2px;background:#000"></div>
<div style="left:11.5px;top:419px;width:2443.5px;height:2px;background:#000"></div>
<div style="left:255.9px;top:43.8px;width:2px;height:377px;background:#000"></div>
<div style="left:433.5px;top:43.8px;width:2px;height:377px;background:#000"></div>
<div style="left:793.5px;top:43.8px;width:2px;height:377px;background:#000"></div>
<div style="left:919.5px;top:43.8px;width:2px;height:377px;background:#000"></div>
<div style="left:1117.5px;top:43.8px;width:2px;height:377px;background:#000"></div>
<span style="left:18.8px;top:51.88px;font-size:24px;color:#111;transform:scaleX(0.9385);">Bag</span>
<span style="left:264px;top:51.88px;font-size:24px;color:#111;transform:scaleX(0.9940);">34-571</span>
<span style="left:442px;top:51.88px;font-size:24px;color:#111;transform:scaleX(0.9582);">BAG 34-571</span>
<span style="left:801px;top:51.88px;font-size:24px;color:#111;transform:scaleX(0.9692);">391</span>
<span style="left:928px;top:51.88px;font-size:24px;color:#111;transform:scaleX(0.9483);">0.782</span>
<span style="left:18.8px;top:89.82px;font-size:24px;color:#111;transform:scaleX(0.9385);">Bag</span>
<span style="left:264px;top:89.82px;font-size:24px;color:#111;transform:scaleX(0.9940);">14-183</span>
<span style="left:442px;top:89.82px;font-size:24px;color:#111;transform:scaleX(0.9582);">BAG 14-183</span>
<span style="left:801px;top:89.82px;font-size:24px;color:#111;transform:scaleX(0.9692);">70</span>
<span style="left:928px;top:89.82px;font-size:24px;color:#111;transform:scaleX(0.9423);">0.35</span>
<span style="left:18.8px;top:127.76px;font-size:24px;color:#111;transform:scaleX(0.9385);">Bag</span>
<span style="left:264px;top:127.76px;font-size:24px;color:#111;transform:scaleX(0.9940);">71-439</span>
<span style="left:442px;top:127.76px;font-size:24px;color:#111;transform:scaleX(0.9582);">BAG 71-439</span>
<span style="left:801px;top:127.76px;font-size:24px;color:#111;transform:scaleX(1.0144);">118</span>
<span style="left:928px;top:127.76px;font-size:24px;color:#111;transform:scaleX(0.9483);">0.295</span>
<span style="left:18.8px;top:165.7px;font-size:24px;color:#111;transform:scaleX(0.9390);">Box</span>
<span style="left:264px;top:165.7px;font-size:24px;color:#111;transform:scaleX(0.9994);">8-544</span>
<span style="left:442px;top:165.7px;font-size:24px;color:#111;transform:scaleX(0.9595);">BOX 8-544</span>
<span style="left:801px;top:165.7px;font-size:24px;color:#111;transform:scaleX(0.9692);">158</span>
<span style="left:928px;top:165.7px;font-size:24px;color:#111;transform:scaleX(0.9521);">0.1975</span>
<span style="left:18.8px;top:203.64px;font-size:24px;color:#111;transform:scaleX(0.9390);">Box</span>
<span style="left:264px;top:203.64px;font-size:24px;color:#111;transform:scaleX(0.9940);">38-606</span>
<span style="left:442px;top:203.64px;font-size:24px;color:#111;transform:scaleX(0.9605);">BOX 38-606</span>
<span style="left:801px;top:203.64px;font-size:24px;color:#111;transform:scaleX(0.9692);">70</span>
<span style="left:928px;top:203.64px;font-size:24px;color:#111;transform:scaleX(0.9483);">0.175</span>
<span style="left:18.8px;top:241.58px;font-size:24px;color:#111;transform:scaleX(0.9390);">Box</span>
<span style="left:264px;top:241.58px;font-size:24px;color:#111;transform:scaleX(0.9940);">55-547</span>
<span style="left:442px;top:241.58px;font-size:24px;color:#111;transform:scaleX(0.9605);">BOX 55-547</span>
<span style="left:801px;top:241.58px;font-size:24px;color:#111;transform:scaleX(0.9692);">183</span>
<span style="left:928px;top:241.58px;font-size:24px;color:#111;transform:scaleX(0.9521);">0.2288</span>
<span style="left:18.8px;top:279.52px;font-size:24px;color:#111;transform:scaleX(0.9390);">Box</span>
<span style="left:264px;top:279.52px;font-size:24px;color:#111;transform:scaleX(0.9940);">14-636</span>
<span style="left:442px;top:279.52px;font-size:24px;color:#111;transform:scaleX(0.9605);">BOX 14-636</span>
<span style="left:801px;top:279.52px;font-size:24px;color:#111;transform:scaleX(0.9692);">168</span>
<span style="left:928px;top:279.52px;font-size:24px;color:#111;transform:scaleX(0.9423);">0.14</span>
<span style="left:18.8px;top:317.46px;font-size:24px;color:#111;transform:scaleX(0.9353);">Labels</span>
<span style="left:264px;top:317.46px;font-size:24px;color:#111;transform:scaleX(0.9994);">1-462</span>
<span style="left:442px;top:317.46px;font-size:24px;color:#111;transform:scaleX(0.9108);">LABELS 1-462</span>
<span style="left:801px;top:317.46px;font-size:24px;color:#111;transform:scaleX(0.9692);">168</span>
<span style="left:928px;top:317.46px;font-size:24px;color:#111;transform:scaleX(0.9521);">0.0035</span>
<span style="left:18.8px;top:355.4px;font-size:24px;color:#111;transform:scaleX(0.9793);">Miscellaneous</span>
<span style="left:264px;top:355.4px;font-size:24px;color:#111;transform:scaleX(0.9940);">70-391</span>
<span style="left:442px;top:355.4px;font-size:24px;color:#111;transform:scaleX(0.9248);">MISCELLANEOUS 70-391</span>
<span style="left:801px;top:355.4px;font-size:24px;color:#111;transform:scaleX(0.9692);">228</span>
<span style="left:928px;top:355.4px;font-size:24px;color:#111;transform:scaleX(0.9483);">0.456</span>
<span style="left:18.8px;top:391.58px;font-size:24px;color:#111;transform:scaleX(0.9493);">Sheet</span>
<span style="left:264px;top:391.58px;font-size:24px;color:#111;transform:scaleX(0.9940);">52-270</span>
<span style="left:442px;top:391.58px;font-size:24px;color:#111;transform:scaleX(0.9162);">SHEET 52-270</span>
<span style="left:801px;top:391.58px;font-size:24px;color:#111;transform:scaleX(0.9692);">168</span>
<span style="left:928px;top:391.58px;font-size:24px;color:#111;transform:scaleX(0.9483);">0.056</span>
</div>
<div style="left:427.2px;top:772.1px;width:2468.8px;height:485.4px;border:5.8px solid #e7432a"></div>
<span style="left:443px;top:1272.86px;font-size:24.5px;font-weight:700;transform:scaleX(0.9436);">COV Bag Stamping</span>
<div style="left:432.5px;top:1314px;width:2459px;border:2px solid #7a98bf;height:46.5px;background:#f0f0f0;overflow:hidden">
<div style="left:138px;top:0px;width:3.4px;height:41px;background:linear-gradient(90deg,#e4e4e4,#fff 45%,#fff 60%,#e8e8e8)"></div>
<div style="left:219.6px;top:0px;width:3.4px;height:41px;background:linear-gradient(90deg,#e4e4e4,#fff 45%,#fff 60%,#e8e8e8)"></div>
<div style="left:310.7px;top:0px;width:3.4px;height:41px;background:linear-gradient(90deg,#e4e4e4,#fff 45%,#fff 60%,#e8e8e8)"></div>
<div style="left:489.6px;top:0px;width:3.4px;height:41px;background:linear-gradient(90deg,#e4e4e4,#fff 45%,#fff 60%,#e8e8e8)"></div>
<div style="left:645.7px;top:0px;width:3.4px;height:41px;background:linear-gradient(90deg,#e4e4e4,#fff 45%,#fff 60%,#e8e8e8)"></div>
<div style="left:771.8px;top:0px;width:3.4px;height:41px;background:linear-gradient(90deg,#e4e4e4,#fff 45%,#fff 60%,#e8e8e8)"></div>
<div style="left:983px;top:0px;width:3.4px;height:41px;background:linear-gradient(90deg,#e4e4e4,#fff 45%,#fff 60%,#e8e8e8)"></div>
<span style="left:6px;top:11.68px;font-size:24px;color:#111;transform:scaleX(0.9837);">Customer</span>
<span style="left:145px;top:11.68px;font-size:24px;color:#111;transform:scaleX(0.9519);">PO#</span>
<span style="left:226.5px;top:11.68px;font-size:24px;color:#111;transform:scaleX(0.9687);">Code</span>
<span style="left:318px;top:11.68px;font-size:24px;color:#111;transform:scaleX(1.0198);">Item Number</span>
<span style="left:496.5px;top:11.68px;font-size:24px;color:#111;transform:scaleX(1.0036);">Description</span>
<span style="left:652.5px;top:11.68px;font-size:24px;color:#111;transform:scaleX(1.0193);">Quantity</span>
<span style="left:779.5px;top:11.68px;font-size:24px;color:#111;transform:scaleX(0.9645);">Best Before Date</span>
<div style="left:0px;top:40.5px;width:2455px;height:3px;background:linear-gradient(#c4c4c4,#8a8a8a)"></div>
</div>
<span style="left:443px;top:1376.26px;font-size:24.5px;font-weight:700;transform:scaleX(0.9267);">Chinese Labeling</span>
<div style="left:432.5px;top:1418px;width:2459px;border:2px solid #7a98bf;height:123px;background:#f0f0f0;overflow:hidden">
<div style="left:12px;top:0px;width:3.4px;height:41px;background:linear-gradient(90deg,#e4e4e4,#fff 45%,#fff 60%,#e8e8e8)"></div>
<div style="left:102px;top:0px;width:3.4px;height:41px;background:linear-gradient(90deg,#e4e4e4,#fff 45%,#fff 60%,#e8e8e8)"></div>
<div style="left:311.8px;top:0px;width:3.4px;height:41px;background:linear-gradient(90deg,#e4e4e4,#fff 45%,#fff 60%,#e8e8e8)"></div>
<div style="left:526px;top:0px;width:3.4px;height:41px;background:linear-gradient(90deg,#e4e4e4,#fff 45%,#fff 60%,#e8e8e8)"></div>
<span style="left:18.8px;top:11.68px;font-size:24px;color:#111;transform:scaleX(0.9687);">Code</span>
<span style="left:110px;top:11.68px;font-size:24px;color:#111;transform:scaleX(1.0241);">Quantity Interior</span>
<span style="left:320px;top:11.68px;font-size:24px;color:#111;transform:scaleX(0.9963);">Quantity Exterior</span>
<div style="left:11.5px;top:39.3px;width:2455px;height:4.2px;background:linear-gradient(#a8a8a8,#4d4d4d)"></div>
<div style="left:11.5px;top:43.5px;width:2443.5px;height:37.7px;background:#fff"></div>
<div style="left:11.5px;top:81.2px;width:2443.5px;height:37.7px;background:#b8d9e5"></div>
<div style="left:8.2px;top:43px;width:3.6px;height:75.9px;background:linear-gradient(90deg,#b8b8b8,#4a4a4a)"></div>
<div style="left:0px;top:79.7px;width:8.2px;height:1.6px;background:#fafafa"></div>
<div style="left:0px;top:117.4px;width:8.2px;height:1.6px;background:#fafafa"></div>
<div style="left:11.5px;top:79.2px;width:2443.5px;height:2px;background:#000"></div>
<div style="left:11.5px;top:116.9px;width:2443.5px;height:2px;background:#000"></div>
<div style="left:101.5px;top:43.3px;width:2px;height:75.4px;background:#000"></div>
<div style="left:311.3px;top:43.3px;width:2px;height:75.4px;background:#000"></div>
<div style="left:525.5px;top:43.3px;width:2px;height:75.4px;background:#000"></div>
<span style="left:18.8px;top:51.38px;font-size:24px;color:#111;transform:scaleX(0.9692);">27427</span>
<span style="left:110px;top:51.38px;font-size:24px;color:#111;transform:scaleX(1.0144);">118</span>
<span style="left:320px;top:51.38px;font-size:24px;color:#111;transform:scaleX(1.0144);">118</span>
<span style="left:18.8px;top:89.08px;font-size:24px;color:#111;transform:scaleX(0.9692);">27638</span>
<span style="left:110px;top:89.08px;font-size:24px;color:#111;transform:scaleX(0.9692);">183</span>
<span style="left:320px;top:89.08px;font-size:24px;color:#111;transform:scaleX(0.9692);">183</span>
</div>
<span style="left:443px;top:1556.76px;font-size:24.5px;font-weight:700;transform:scaleX(0.9550);">#2 Packaging Instructions</span>
<div style="left:432.5px;top:1597.5px;width:2459px;border:2px solid #7a98bf;height:37px;border-bottom:none;background:#f0f0f0;overflow:hidden">
<div style="left:12px;top:0px;width:3.4px;height:41px;background:linear-gradient(90deg,#e4e4e4,#fff 45%,#fff 60%,#e8e8e8)"></div>
<div style="left:176px;top:0px;width:3.4px;height:41px;background:linear-gradient(90deg,#e4e4e4,#fff 45%,#fff 60%,#e8e8e8)"></div>
<div style="left:352px;top:0px;width:3.4px;height:41px;background:linear-gradient(90deg,#e4e4e4,#fff 45%,#fff 60%,#e8e8e8)"></div>
<div style="left:614px;top:0px;width:3.4px;height:41px;background:linear-gradient(90deg,#e4e4e4,#fff 45%,#fff 60%,#e8e8e8)"></div>
<div style="left:745px;top:0px;width:3.4px;height:41px;background:linear-gradient(90deg,#e4e4e4,#fff 45%,#fff 60%,#e8e8e8)"></div>
<span style="left:18.8px;top:11.68px;font-size:24px;color:#111;transform:scaleX(0.9770);">Type</span>
<span style="left:183.5px;top:11.68px;font-size:24px;color:#111;transform:scaleX(1.0198);">Item Number</span>
<span style="left:359.5px;top:11.68px;font-size:24px;color:#111;transform:scaleX(1.0036);">Description</span>
<span style="left:620.5px;top:11.68px;font-size:24px;color:#111;transform:scaleX(1.0193);">Quantity</span>
<div style="left:0px;top:40.5px;width:2455px;height:3px;background:linear-gradient(#c4c4c4,#8a8a8a)"></div>
</div>
</body></html>
